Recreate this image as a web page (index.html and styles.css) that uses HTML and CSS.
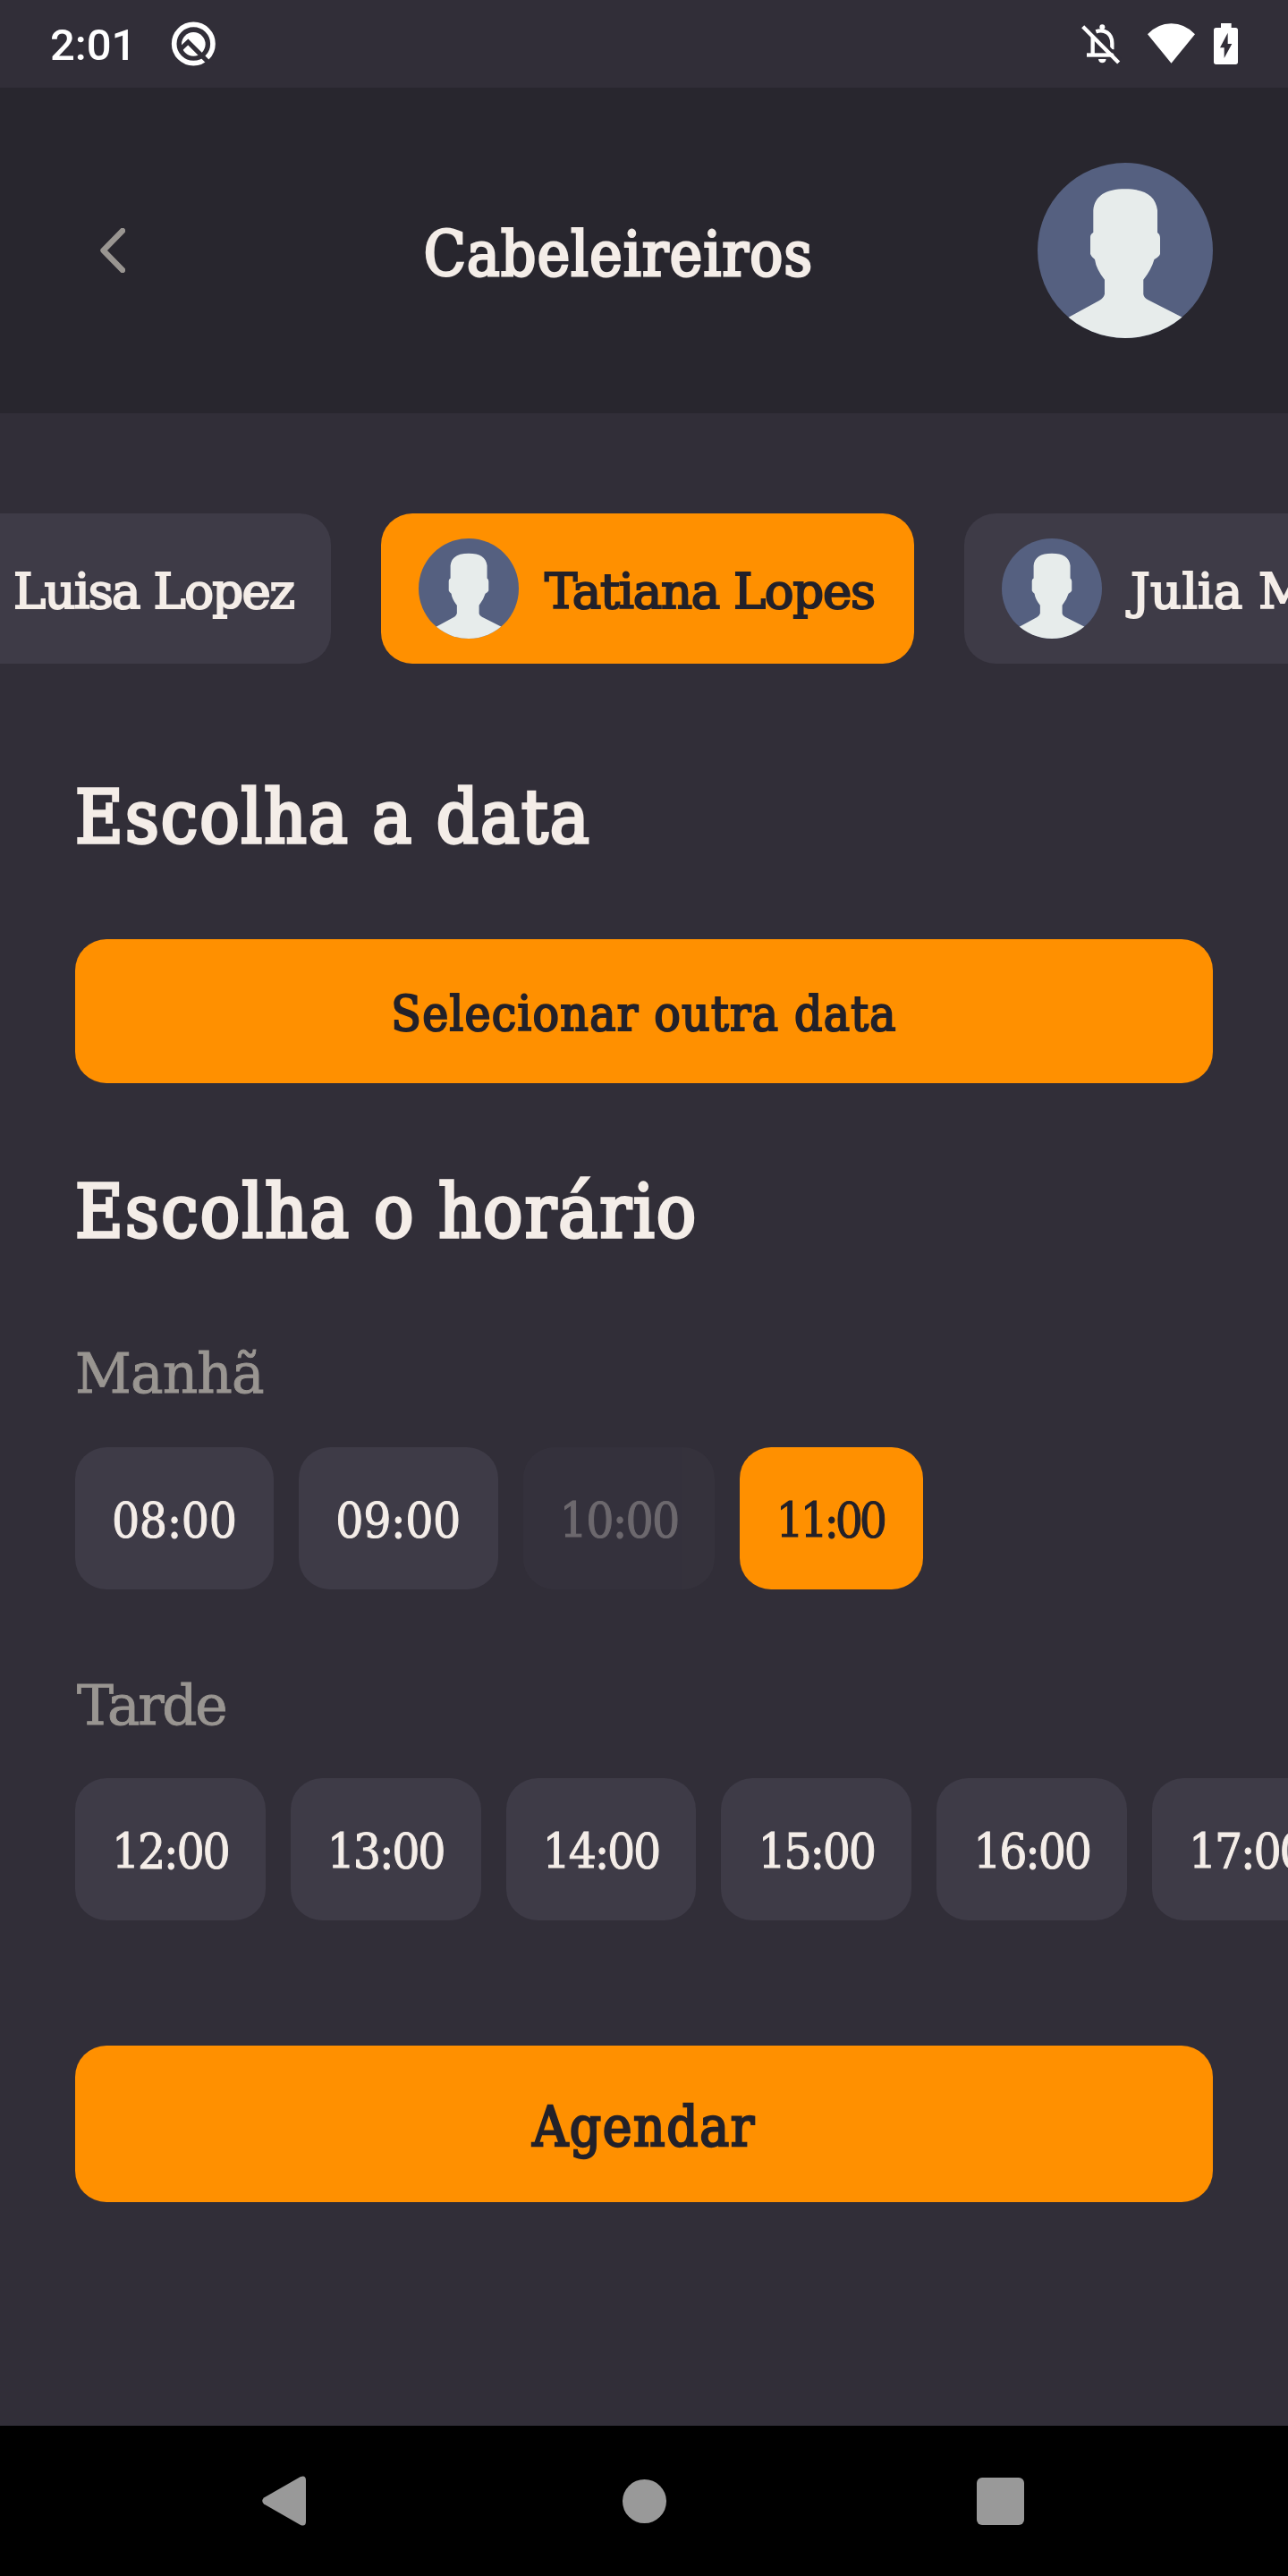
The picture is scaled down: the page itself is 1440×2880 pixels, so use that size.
FILE: index.html
```html
<!DOCTYPE html>
<html lang="pt-BR">
<head>
<meta charset="utf-8">
<title>Cabeleireiros</title>
<link rel="stylesheet" href="styles.css">
</head>
<body>
<svg class="sprite" aria-hidden="true">
  <symbol id="avatar" viewBox="0 0 196 196">
    <rect width="196" height="196" fill="#556080"/>
    <path fill="#e7eceb" d="M62.3 53C64 37 76 29.300 98 29.300S132 37 134 53V78Q137 80 137 84V102Q136 105 130.500 108Q127 120 118.300 130.700V147Q119 151 124 153.500L160.300 172L180 182V196H16V182L36 172L69 154Q74 151 75 146.700V130.700Q65.500 119 64 108Q60 105 59 102V83Q59 80 62.300 78Z"/>
  </symbol>
</svg>

<div class="screen">
  <div class="status">
    <span class="status__time">2:01</span>
    <svg class="status__app" viewBox="570 66 160 160">
      <circle cx="649" cy="147" r="65" fill="none" stroke="#fff" stroke-width="17"/>
      <circle cx="649" cy="148" r="40" fill="#fff"/>
      <path d="M604 166L631 141L708 218" fill="none" stroke="#312e38" stroke-width="15"/>
    </svg>
    <svg class="status__bell" viewBox="84 78 138 141">
      <g fill="none" stroke="#fff" stroke-width="13">
        <path d="M125 184V124"/>
        <path d="M105 184.500H196"/>
        <path d="M136 106Q157 99 173 109Q190 121 190 145V166"/>
      </g>
      <circle cx="157" cy="91" r="9" fill="#fff"/>
      <path d="M144 198H170Q168 211 157 211T144 198Z" fill="#fff"/>
      <path d="M110 90L224 204" stroke="#312e38" stroke-width="8"/>
      <path d="M92 89L212 210" stroke="#fff" stroke-width="13"/>
    </svg>
    <svg class="status__wifi" viewBox="309 78 159 134"><path fill="#fff" d="M309 115Q343 79 388.500 79T468 115L388.500 212Z"/></svg>
    <svg class="status__battery" viewBox="531 78 81 138">
      <path fill="#fff" d="M555 78H590V93H604Q612 93 612 101V208Q612 216 604 216H539Q531 216 531 208V101Q531 93 539 93H555Z"/>
      <path fill="#312e38" d="M578 110L552 160H566V195L592 147H578Z"/>
    </svg>
  </div>

  <header class="header">
    <div class="back"><svg class="back__icon" viewBox="0 0 28 50"><path d="M25 3L3.500 25L25 47" fill="none" stroke="#999591" stroke-width="6.400" stroke-linecap="round" stroke-linejoin="round"/></svg></div>
    <h1 class="title">Cabeleireiros</h1>
    <svg class="header__avatar"><use href="#avatar"/></svg>
  </header>

  <div class="providers">
    <div class="provider"><svg class="provider__avatar"><use href="#avatar"/></svg><span class="provider__name">Luisa Lopez</span></div>
    <div class="provider provider--selected"><svg class="provider__avatar"><use href="#avatar"/></svg><span class="provider__name">Tatiana Lopes</span></div>
    <div class="provider provider--julia"><svg class="provider__avatar"><use href="#avatar"/></svg><span class="provider__name">Julia M</span></div>
  </div>

  <main class="content">
    <h2 class="heading heading--date">Escolha a data</h2>
    <div class="button button--date"><span>Selecionar outra data</span></div>
    <h2 class="heading heading--hour">Escolha o horário</h2>
    <h3 class="period period--morning">Manhã</h3>
    <div class="slots">
      <div class="slot slot--wide"><span>08:00</span></div>
      <div class="slot slot--wide"><span>09:00</span></div>
      <div class="slot slot--disabled"><span>10:00</span></div>
      <div class="slot slot--selected"><span>11:00</span></div>
    </div>
    <h3 class="period period--afternoon">Tarde</h3>
    <div class="slots">
      <div class="slot"><span>12:00</span></div>
      <div class="slot"><span>13:00</span></div>
      <div class="slot"><span>14:00</span></div>
      <div class="slot"><span>15:00</span></div>
      <div class="slot"><span>16:00</span></div>
      <div class="slot"><span>17:00</span></div>
    </div>
    <div class="button button--submit"><span>Agendar</span></div>
  </main>

  <nav class="navbar">
    <svg class="navbar__back" viewBox="0 0 49 56"><path fill="#999" d="M2 24.500L43 1Q49 -1 49 5V51Q49 57 43 55L2 31.500Q-1.500 28 2 24.500Z"/></svg>
    <span class="navbar__home"></span>
    <span class="navbar__recent"></span>
  </nav>
</div>
</body>
</html>
```
FILE: styles.css
```css
* { box-sizing: border-box; margin: 0; }

body {
  background: #312e38;
  color: #f4ede8;
  font-family: "DejaVu Serif Condensed", "DejaVu Serif", serif;
  overflow: hidden;
}

.sprite { display: none; }

.screen {
  display: flex;
  flex-direction: column;
  width: 1440px;
  height: 2880px;
  overflow: hidden;
}

.screen svg { flex: none; display: block; }

/* Status bar */
.status {
  display: flex;
  align-items: flex-start;
  height: 98px;
  padding: 0 56px 0 56px;
  color: #fff;
}
.status__time {
  font: 500 49px/60px Roboto, sans-serif;
  margin-top: 21px;
  width: 134px;
}
.status__app { width: 53.300px; height: 53.300px; margin-top: 22px; }
.status__bell { width: 46px; height: 47px; margin: 26px 29px 0 auto; }
.status__wifi { width: 53px; height: 44.700px; margin: 26px 21px 0 0; }
.status__battery { width: 27px; height: 46px; margin-top: 26px; }

/* Header */
.header {
  display: flex;
  align-items: center;
  justify-content: space-between;
  height: 364px;
  padding: 0 84px;
  background: #28262e;
}
.back { width: 139px; padding-left: 28px; }
.back__icon { width: 28px; height: 50px; }
.title {
  font-size: 68.300px;
  font-weight: 400;
  line-height: 92px;
  padding-top: 9px;
  letter-spacing: 1.350px;
  -webkit-text-stroke: .042em;
}
.header__avatar { width: 196px; height: 196px; border-radius: 50%; }

/* Providers carousel, scrolled to the selected one */
.providers {
  display: flex;
  gap: 56px;
  margin: 112px 0 0 -167px;
}
.provider {
  display: flex;
  flex: none;
  align-items: center;
  gap: 28px;
  width: 537px;
  height: 168px;
  padding: 28px 0 28px 42px;
  border-radius: 35px;
  background: #3e3b47;
}
.provider__avatar { width: 112px; height: 112px; border-radius: 50%; }
.provider__name {
  font-family: "DejaVu Serif", serif;
  font-size: 54.600px;
  line-height: 74px;
  padding-top: 5px;
  letter-spacing: -1.700px;
  white-space: nowrap;
  -webkit-text-stroke: .038em;
}
.provider--selected { width: 596px; background: #ff9000; color: #232129; }
.provider--selected .provider__name { padding-left: 1px; letter-spacing: -1.350px; }
.provider--julia .provider__name { padding-left: 4px; letter-spacing: .200px; }

/* Content */
.content {
  display: flex;
  flex-direction: column;
  flex: 1;
  padding: 0 84px;
}
.heading {
  font-size: 82px;
  font-weight: 400;
  line-height: 110px;
  -webkit-text-stroke: .042em;
}
.heading--date { margin: 117px 0 81px; letter-spacing: 2.050px; }
.heading--hour { margin: 89px 0 84px; letter-spacing: 2.250px; }

.button {
  display: flex;
  align-items: center;
  justify-content: center;
  border-radius: 35px;
  background: #ff9000;
  color: #232129;
  -webkit-text-stroke: .038em;
}
.button--date {
  height: 161px;
  padding-top: 5px;
  font-size: 54.600px;
  letter-spacing: 1.250px;
}
.button--submit {
  height: 175px;
  margin-top: 140px;
  padding-top: 5px;
  font-size: 61.400px;
  letter-spacing: 1.600px;
}

.period {
  color: #999591;
  font-family: "DejaVu Serif", serif;
  font-size: 61.400px;
  font-weight: 400;
  line-height: 84px;
  -webkit-text-stroke: .015em;
}
.period--morning { margin-bottom: 40px; letter-spacing: -.900px; }
.period--afternoon { margin: 88px 0 39px; padding-left: 2px; letter-spacing: -2.300px; }

.slots { display: flex; gap: 28px; }
.slot {
  display: flex;
  flex: none;
  align-items: center;
  width: 212.800px;
  height: 159px;
  padding: 4px 0 0 41px;
  border-radius: 35px;
  background: #3e3b47;
  font-size: 54.600px;
  letter-spacing: -2.200px;
  -webkit-text-stroke: .018em;
}
.slot--wide { width: 222.300px; letter-spacing: -.400px; }
.slot--disabled { width: 214px; letter-spacing: -1.700px; opacity: .3; }
.slot--selected { width: 205px; letter-spacing: -4.300px; background: #ff9000; color: #232129; }

/* System navigation */
.navbar {
  display: flex;
  align-items: center;
  justify-content: space-between;
  height: 168px;
  padding: 0 295px 0 293px;
  background: #000;
}
.navbar__back { width: 49px; height: 56px; }
.navbar__home { width: 49px; height: 49px; margin-left: 6px; border-radius: 50%; background: #999; }
.navbar__recent { width: 53px; height: 53px; border-radius: 6px; background: #999; }
```
